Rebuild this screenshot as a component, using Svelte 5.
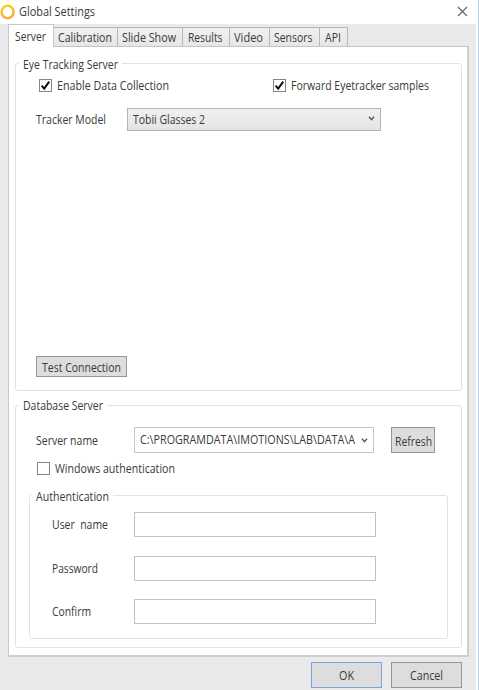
<script>
  const tabs = [
    { name: 'Calibration', box: 64, text: 54 },
    { name: 'Slide Show', box: 65, text: 54 },
    { name: 'Results', box: 47, text: 34.5 },
    { name: 'Video', box: 40, text: 29 },
    { name: 'Sensors', box: 50, text: 38.5 },
    { name: 'API', box: 28, text: 16 }
  ];
  const fields = [
    { name: 'User\u00a0 name', text: 56 },
    { name: 'Password', text: 46 },
    { name: 'Confirm', text: 39 }
  ];
</script>

{#snippet label(text, width, y = 13)}
  <svg class="label" {width} height="17"><text x="0" {y} textLength={width} lengthAdjust="spacingAndGlyphs">{text}</text></svg>
{/snippet}

{#snippet check(on)}
  <span class="check">
    {#if on}
      <svg width="11" height="11" viewBox="0 0 11 11"><path d="M1.6 5.7 4.2 8.6 9.2 1.6" fill="none" stroke="#111" stroke-width="2" /></svg>
    {/if}
  </span>
{/snippet}

{#snippet chevron()}
  <svg class="chevron" width="7" height="5" viewBox="0 0 7 5"><path d="M1 .8 3.5 3.6 6 .8" fill="none" stroke="#555" stroke-width="1.4" /></svg>
{/snippet}

<div class="window">
  <header>
    <svg class="logo" width="16" height="18" viewBox="0 0 16 18">
      <defs><linearGradient id="ring" x1="0" y1="0" x2="0.3" y2="1"><stop offset="0" stop-color="#ffd21f" /><stop offset="1" stop-color="#f6ad45" /></linearGradient></defs>
      <ellipse cx="7.6" cy="9" rx="6" ry="6.3" fill="none" stroke="url(#ring)" stroke-width="2.6" />
    </svg>
    {@render label('Global Settings', 76)}
    <svg class="close" width="11" height="11" viewBox="0 0 11 11"><path d="M1 1 10 10M10 1 1 10" stroke="#666" stroke-width="1.2" /></svg>
  </header>

  <main>
    <nav>
      <div class="tab active">{@render label('Server', 31, 12.5)}</div>
      {#each tabs as tab}
        <div class="tab" style:width="{tab.box}px">{@render label(tab.name, tab.text)}</div>
      {/each}
    </nav>

    <div class="panel">
      <section class="group tracking">
        <div class="legend">{@render label('Eye Tracking Server', 95, 12.5)}</div>
        <div class="row options">
          {@render check(true)}
          {@render label('Enable Data Collection', 112, 12.5)}
          <div class="row forward">
            {@render check(true)}
            {@render label('Forward Eyetracker samples', 138, 12.5)}
          </div>
        </div>
        <div class="row model">
          {@render label('Tracker Model', 70)}
          <div class="select">{@render label('Tobii Glasses 2', 72)}{@render chevron()}</div>
        </div>
        <button class="test">{@render label('Test Connection', 79, 13.5)}</button>
      </section>

      <section class="group database">
        <div class="legend">{@render label('Database Server', 80, 12)}</div>
        <div class="row server">
          {@render label('Server name', 62)}
          <div class="select combo">{@render label('C:\\PROGRAMDATA\\IMOTIONS\\LAB\\DATA\\A', 215, 12)}{@render chevron()}</div>
          <button class="refresh">{@render label('Refresh', 37, 13.5)}</button>
        </div>
        <div class="row windows">
          {@render check(false)}
          {@render label('Windows authentication', 120)}
        </div>
        <div class="group auth">
          <div class="legend">{@render label('Authentication', 73, 12.5)}</div>
          <div class="fields">
            {#each fields as field}
              <div class="row field">
                {@render label(field.name, field.text)}
                <input aria-label={field.name} />
              </div>
            {/each}
          </div>
        </div>
      </section>
    </div>

    <footer>
      <button class="ok">{@render label('OK', 15)}</button>
      <button>{@render label('Cancel', 33)}</button>
    </footer>
  </main>
</div>

<style>
  .window, .window * { box-sizing: border-box; }
  .window {
    width: 479px;
    height: 690px;
    background: #fff;
    border-right: 1px solid #b5d0ec;
    overflow: hidden;
    font-family: 'Open Sans', 'Noto Sans', sans-serif;
    font-size: 12.5px;
  }
  .label { display: block; flex: none; overflow: visible; }
  .label text { fill: #3a3a3a; white-space: pre; }
  header { display: flex; height: 24px; padding: 3px 10px 0 0; align-items: flex-start; }
  .logo { margin-right: 3px; flex: none; }
  .close { margin: 3px 0 0 auto; }
  main { width: 476px; height: 666px; background: #e9eaeb; padding: 0 7px 0 8px; }
  nav { display: flex; align-items: flex-end; height: 22px; }
  .tab {
    display: flex;
    justify-content: center;
    flex: none;
    height: 19px;
    padding: 1px 2px 0 0;
    background: linear-gradient(#f0f0f0, #e6e6e6);
    border: 1px solid #b8b8b8;
    border-left-width: 0;
    border-bottom: 0;
  }
  .tab.active {
    position: relative;
    z-index: 1;
    width: 46px;
    height: 23px;
    margin-bottom: -1px;
    padding-top: 3px;
    background: #fff;
    border-left-width: 1px;
    border-color: #c8c8c8;
  }
  .panel {
    width: 461px;
    height: 611px;
    background: #fff;
    border: 1px solid;
    border-bottom-width: 2px;
    border-right-width: 2px;
    border-color: #c3c4c5 #cfcfd0 #cfcfd0 #c8c9ca;
    padding: 16px 5px 0 6px;
  }
  .group { border: 1px solid #dce4eb; border-radius: 3px; }
  .legend {
    width: max-content;
    height: 17px;
    margin: -8px 0 0 3px;
    padding: 0 4px;
    background: #fff;
  }
  .row { display: flex; align-items: center; }
  .tracking { height: 328px; width: 447px; }
  .options { margin: 4px 0 0 23px; height: 17px; gap: 5px; }
  .forward { margin-left: 99px; gap: 5px; }
  .check {
    display: block;
    width: 13px;
    height: 13px;
    flex: none;
    border: 1px solid #858585;
    background: #fff;
  }
  .check svg { display: block; }
  .model { margin: 14px 0 0 20px; height: 23px; }
  .select {
    display: flex;
    align-items: center;
    width: 254px;
    height: 23px;
    margin-left: 21px;
    padding: 0 5px;
    border: 1px solid #b4b4b4;
    background: linear-gradient(#f0f0f0, #e4e4e4);
  }
  .select > :global(.chevron) { margin: -2px 0 0 auto; flex: none; }
  button {
    display: flex;
    align-items: center;
    justify-content: center;
    flex: none;
    padding: 0;
    width: 71px;
    height: 26px;
    font: inherit;
    border: 1px solid #969696;
    border-radius: 0;
    background: #ddd;
  }
  .test { width: 91px; height: 21px; margin: 225px 0 0 20px; }
  .database { width: 447px; height: 243px; margin-top: 14px; }
  .server { margin: 12px 0 0 20px; height: 26px; }
  .combo { width: 240px; height: 26px; margin-left: 36px; background: #fff; border-color: #c4c4c4; }
  .combo > :global(.chevron) { margin-top: 0; }
  .refresh { width: 44px; margin-left: 17px; }
  .windows { margin: 7px 0 0 21px; height: 17px; gap: 5px; }
  .auth { width: 419px; height: 144px; margin: 18px 0 0 13px; }
  .auth .legend { margin-left: 2px; }
  .fields { display: flex; flex-direction: column; gap: 18.5px; margin: 7px 0 0 22px; }
  .field { justify-content: space-between; width: 324px; height: 25px; }
  input {
    width: 242px;
    height: 25px;
    padding: 0;
    border: 1px solid #c0c1c4;
    border-radius: 0;
    background: #fff;
  }
  footer { display: flex; justify-content: flex-end; gap: 9px; padding: 5px 7px 0 0; }
  .ok { border-color: #7da2dc; }
</style>
